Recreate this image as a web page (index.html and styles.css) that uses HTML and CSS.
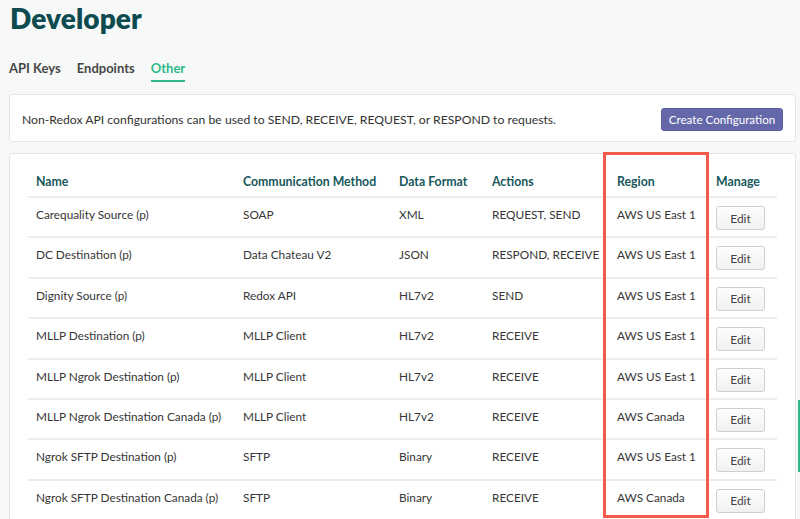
FILE: index.html
```html
<!DOCTYPE html>
<html>
<head>
<meta charset="utf-8">
<link rel="stylesheet" href="styles.css">
</head>
<body>
<div class="page">
  <h1 class="title">Developer</h1>
  <nav class="tabs">
    <span class="tab">API Keys</span>
    <span class="tab">Endpoints</span>
    <span class="tab active">Other</span>
  </nav>
  <div class="card intro">
    <p class="intro-text">Non-Redox API configurations can be used to SEND, RECEIVE, REQUEST, or RESPOND to requests.</p>
    <button class="btn-primary">Create Configuration</button>
  </div>
  <div class="card list">
    <table class="grid">
      <colgroup>
        <col class="c1"><col class="c2"><col class="c3"><col class="c4"><col class="c5"><col class="c6">
      </colgroup>
      <thead>
        <tr><th>Name</th><th>Communication Method</th><th>Data Format</th><th>Actions</th><th>Region</th><th>Manage</th></tr>
      </thead>
      <tbody>
        <tr><td>Carequality Source (p)</td><td>SOAP</td><td>XML</td><td>REQUEST, SEND</td><td>AWS US East 1</td><td><button class="btn">Edit</button></td></tr>
        <tr><td>DC Destination (p)</td><td>Data Chateau V2</td><td>JSON</td><td>RESPOND, RECEIVE</td><td>AWS US East 1</td><td><button class="btn">Edit</button></td></tr>
        <tr><td>Dignity Source (p)</td><td>Redox API</td><td>HL7v2</td><td>SEND</td><td>AWS US East 1</td><td><button class="btn">Edit</button></td></tr>
        <tr><td>MLLP Destination (p)</td><td>MLLP Client</td><td>HL7v2</td><td>RECEIVE</td><td>AWS US East 1</td><td><button class="btn">Edit</button></td></tr>
        <tr><td>MLLP Ngrok Destination (p)</td><td>MLLP Client</td><td>HL7v2</td><td>RECEIVE</td><td>AWS US East 1</td><td><button class="btn">Edit</button></td></tr>
        <tr><td>MLLP Ngrok Destination Canada (p)</td><td>MLLP Client</td><td>HL7v2</td><td>RECEIVE</td><td>AWS Canada</td><td><button class="btn">Edit</button></td></tr>
        <tr><td>Ngrok SFTP Destination (p)</td><td>SFTP</td><td>Binary</td><td>RECEIVE</td><td>AWS US East 1</td><td><button class="btn">Edit</button></td></tr>
        <tr><td>Ngrok SFTP Destination Canada (p)</td><td>SFTP</td><td>Binary</td><td>RECEIVE</td><td>AWS Canada</td><td><button class="btn">Edit</button></td></tr>
      </tbody>
    </table>
  </div>
</div>
<div class="highlight"></div>
<div class="edge-bar"></div>
</body>
</html>
```

FILE: styles.css
```css
html, body {
  margin: 0;
  padding: 0;
  background: #f6f9f8;
  font-family: "Lato", "Open Sans", sans-serif;
  color: #3d3d3d;
  overflow: hidden;
  height: 519px;
}
.page {
  padding: 0 4px 0 9px;
}
.title {
  margin: 0;
  padding: 1px 0 0 1px;
  font-size: 28px;
  line-height: 34px;
  font-weight: 800;
  color: #0e4b50;
  letter-spacing: 0.1px;
}
.tabs {
  display: flex;
  gap: 16px;
  margin-top: 19px;
  height: 28px;
}
.tab {
  font-size: 13px;
  font-weight: 700;
  color: #474747;
  line-height: 16px;
  padding-top: 6px;
  height: 28px;
  box-sizing: border-box;
}
.tab.active {
  color: #2fb98a;
  border-bottom: 2.5px solid #2fb98a;
}
.card {
  background: #fff;
  border: 1px solid #e2e6e5;
  border-radius: 3px;
}
.intro {
  margin-top: 12px;
  height: 46px;
  display: flex;
  align-items: center;
  justify-content: space-between;
  padding: 0 12px 0 12px;
}
.intro-text {
  margin: 2px 0 0;
  font-size: 12.2px;
  color: #333;
}
.btn-primary {
  background: #6468a9;
  color: #fff;
  border: 1px solid #5a5e9e;
  border-radius: 3px;
  font-family: inherit;
  font-size: 11.6px;
  height: 23px;
  width: 122px;
  padding: 0;
  margin-top: 2px;
}
.list {
  margin-top: 11px;
  padding: 15px 18px 0 18px;
  height: 400px;
}
.grid {
  width: 749px;
  border-collapse: collapse;
  table-layout: fixed;
  font-size: 11.8px;
}
.c1 { width: 207px; }
.c2 { width: 156px; }
.c3 { width: 93px; }
.c4 { width: 125px; }
.c5 { width: 99px; }
.c6 { width: 69px; }
.grid th {
  text-align: left;
  font-weight: 700;
  color: #17585b;
  padding: 6px 8px 7px;
  height: 14px;
  line-height: 14px;
  border-bottom: 2px solid #eceeed;
  font-size: 12.3px;
}
.grid td {
  padding: 10px 8px 0;
  height: 28.4px;
  vertical-align: top;
  line-height: 14px;
  border-bottom: 2px solid #eceeed;
  color: #363636;
  white-space: nowrap;
}
.btn {
  font-family: inherit;
  font-size: 12px;
  color: #444;
  background: linear-gradient(#fdfdfd, #f1f1f1);
  border: 1px solid #cfcfcf;
  border-radius: 3px;
  width: 49px;
  height: 24px;
  margin-top: -2px;
}
.highlight {
  position: absolute;
  left: 603px;
  top: 152px;
  width: 100px;
  height: 360px;
  border: 3px solid #f25a4b;
}
.edge-bar {
  position: absolute;
  left: 798px;
  top: 400px;
  width: 2px;
  height: 72px;
  background: #2fb98a;
}
```
